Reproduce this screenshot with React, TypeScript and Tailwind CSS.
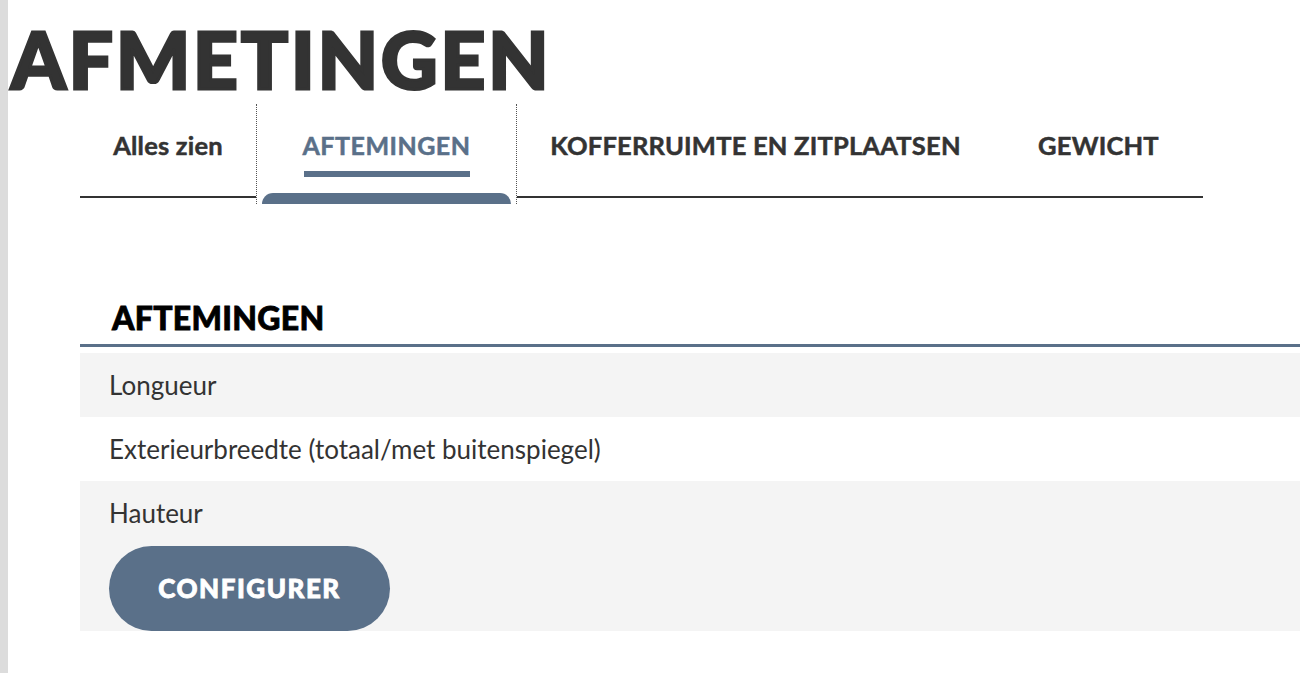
const tabs = [
  { label: 'Alles zien', width: 'w-[176px]' },
  { label: 'AFTEMINGEN', width: 'w-[261px]', active: true },
  { label: 'KOFFERRUIMTE EN ZITPLAATSEN', width: 'w-[477px]' },
  { label: 'GEWICHT', width: 'flex-1' },
];

const rows = ['Longueur', 'Exterieurbreedte (totaal/met buitenspiegel)', 'Hauteur'];

const App = () => {
  return (
    <div className="flex min-h-[673px] bg-white font-['Lato',sans-serif] text-[#333]">
      <div className="w-2 shrink-0 bg-[#dcdcdc]" />

      <div className="flex-1">
        <h1 className="pl-[3px] pt-[14px] text-[78px] leading-[90px] font-black tracking-[3px] text-[#333] [-webkit-text-stroke:3px_#333]">
          AFMETINGEN
        </h1>

        <nav className="ml-[72px] flex w-[1123px] items-start">
          {tabs.map((tab) =>
            tab.active ? (
              <div
                key={tab.label}
                className={`${tab.width} flex h-[100px] flex-col items-center border-x border-dotted border-[#555]`}
              >
                <span className="pt-[27px] text-[25px] leading-[28px] font-bold tracking-[0.5px] text-[#5a7089] [-webkit-text-stroke:0.5px_#5a7089]">
                  {tab.label}
                </span>
                <span className="mt-[12px] h-[6px] w-[166px] bg-[#5a7089]" />
                <span className="mt-auto h-[11px] w-[249px] rounded-t-[12px] bg-[#5a7089]" />
              </div>
            ) : (
              <div
                key={tab.label}
                className={`${tab.width} flex h-[94px] items-start justify-center border-b-2 border-[#333] pt-[27px]`}
              >
                <span className="text-[25.5px] leading-[28px] font-bold tracking-[0.2px] text-[#333] [-webkit-text-stroke:0.5px_#333]">
                  {tab.label}
                </span>
              </div>
            ),
          )}
        </nav>

        <section className="ml-[72px] mt-[96px]">
          <h2 className="pl-[32px] text-[32px] leading-[36px] font-black tracking-[0.3px] text-black [-webkit-text-stroke:0.8px_#000]">
            AFTEMINGEN
          </h2>
          <div className="mt-[8px] h-[3px] bg-[#5a7089]" />

          <div className="mt-[6px]">
            {rows.map((row, i) => (
              <div
                key={row}
                className={`px-[29px] ${i % 2 === 0 ? 'bg-[#f4f4f4]' : 'bg-white'} ${
                  i === 2 ? 'pt-[17px]' : 'flex h-[64px] items-center'
                }`}
              >
                <span className="text-[26px] leading-[30px]">{row}</span>
                {i === 2 && (
                  <div className="mt-[17px]">
                    <button className="h-[85px] w-[281px] rounded-full bg-[#5a7089] text-[26px] font-black tracking-[1.5px] text-white [-webkit-text-stroke:0.8px_#fff]">
                      CONFIGURER
                    </button>
                  </div>
                )}
              </div>
            ))}
          </div>
        </section>
      </div>
    </div>
  );
};

export default App;
